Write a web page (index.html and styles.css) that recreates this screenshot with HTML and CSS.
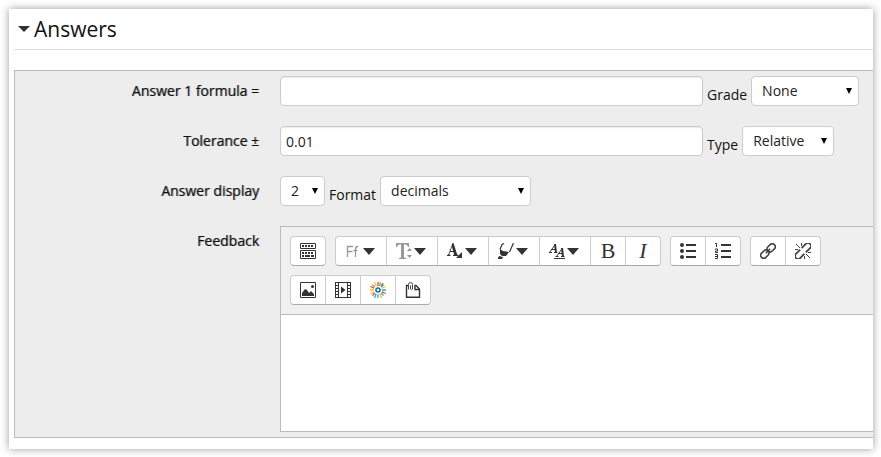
FILE: index.html
```html
<!DOCTYPE html>
<html lang="en">
<head>
<meta charset="utf-8">
<title>Answers</title>
<link rel="stylesheet" href="styles.css">
</head>
<body>
<main class="panel">
  <h2 class="heading"><svg class="twisty" width="12" height="6" viewBox="0 0 12 6"><path d="M0 0h12L6 6z"/></svg>Answers</h2>
  <form class="answers">
    <div class="row">
      <label class="name" for="formula">Answer 1 formula =</label>
      <div class="fields">
        <input class="text" id="formula" type="text">
        <label class="side" for="grade">Grade</label>
        <select class="grade" id="grade"><option>None</option></select>
      </div>
    </div>
    <div class="row">
      <label class="name" for="tolerance">Tolerance ±</label>
      <div class="fields">
        <input class="text" id="tolerance" type="text" value="0.01">
        <label class="side" for="type">Type</label>
        <select class="type" id="type"><option>Relative</option></select>
      </div>
    </div>
    <div class="row">
      <label class="name" for="digits">Answer display</label>
      <div class="fields">
        <select class="digits" id="digits"><option>2</option></select>
        <label class="side" for="format">Format</label>
        <select class="format" id="format"><option>decimals</option></select>
      </div>
    </div>
    <div class="row">
      <label class="name" for="feedback">Feedback</label>
      <div class="editor">
        <div class="toolbar">
          <div class="group">
            <button type="button" aria-label="Show more buttons"><svg width="16" height="16" viewBox="0 0 16 16"><path fill="none" stroke="#333" d="M.5.5h15v5H.5zM.5 7.500h15v8H.5z"/><path stroke="#333" stroke-width="2" stroke-dasharray="2 1" d="M2 3h12M2 10h12"/><path stroke="#333" stroke-width="2" d="M2 13h2M5 13h5M11 13h3"/></svg></button>
          </div>
          <div class="group">
            <button type="button" class="menu" aria-label="Font family"><svg width="16" height="16" viewBox="0 0 16 16"><path fill="none" stroke="#999" stroke-width="1.300" d="M2.500 14V3.500H8M2.500 8.500h5M10.500 14V6q0-2.500 2.500-2.500M8.500 7.500h4"/></svg><svg class="caret" width="12" height="7" viewBox="0 0 12 7"><path d="M0 0h12L6 7z"/></svg></button>
            <button type="button" class="menu" aria-label="Font size"><svg width="16" height="16" viewBox="0 0 16 16"><path fill="#999" d="M0 0h13v4h-1q-.5-2.500-2.500-2.500H8V14q0 1 2 1v1H3v-1q2 0 2-1V1.500H3.500Q1.500 1.500 1 4H0zM11 8l2.500-3L16 8zM11 12h5l-2.500 3z"/></svg><svg class="caret" width="12" height="7" viewBox="0 0 12 7"><path d="M0 0h12L6 7z"/></svg></button>
            <button type="button" class="menu" aria-label="Font colour"><svg width="16" height="16" viewBox="0 0 16 16"><path fill="#333" fill-rule="evenodd" d="M5.500 0h1L10 11q.4 1 1.500 1v1H6v-1q1.500 0 1-1l-.6-2H3l-.6 2q-.3 1 1.100 1v1H0v-1q1 0 1.500-1zM5 3.500L3.500 8H6z"/><path fill="#333" d="M15 9v6H9z"/></svg><svg class="caret" width="12" height="7" viewBox="0 0 12 7"><path d="M0 0h12L6 7z"/></svg></button>
            <button type="button" class="menu" aria-label="Background colour"><svg width="16" height="16" viewBox="0 0 16 16"><path fill="none" stroke="#333" stroke-width="1.200" d="M6 .5L4 1.500 2 6.500M15.500 0l-4 9"/><path fill="#333" d="M2 6l3 2 6 1-3 4H4L2 11zM1 13l4 1-1 2H0v-1z"/></svg><svg class="caret" width="12" height="7" viewBox="0 0 12 7"><path d="M0 0h12L6 7z"/></svg></button>
            <button type="button" class="menu" aria-label="Text style"><svg width="16" height="16" viewBox="0 0 16 16"><path fill="none" stroke="#333" d="M.5 9.500L6.500 1M2 6.500h4M0 9.500h3M5 9.500h3.500M7.500 13.500l6-8.500M9 10.500h4M6.500 13.500h3M12 13.500h3.500M5 15.500h11"/><path stroke="#333" stroke-width="2" d="M6 1l1 8.500M13 5l1 8.500"/></svg><svg class="caret" width="12" height="7" viewBox="0 0 12 7"><path d="M0 0h12L6 7z"/></svg></button>
            <button type="button" class="letter" aria-label="Bold">B</button>
            <button type="button" class="letter italic" aria-label="Italic">I</button>
          </div>
          <div class="group">
            <button type="button" aria-label="Unordered list"><svg width="16" height="16" viewBox="0 0 16 16"><path stroke="#333" stroke-width="2" d="M6 2h10M6 8h10M6 14h10"/><g fill="#333"><circle cx="2" cy="2" r="2"/><circle cx="2" cy="8" r="2"/><circle cx="2" cy="14" r="2"/></g></svg></button>
            <button type="button" aria-label="Ordered list"><svg width="16" height="16" viewBox="0 0 16 16"><path stroke="#333" stroke-width="2" d="M6 2h10M6 8h10M6 14h10"/><path fill="none" stroke="#333" d="M0 .5h1.500V4M0 6h2.500v2H.5v1.500H3M0 11.500h2.500v4H0M0 13.500h2.500"/></svg></button>
          </div>
          <div class="group">
            <button type="button" aria-label="Link"><svg width="16" height="16" viewBox="0 0 16 16"><g fill="none" stroke="#444" stroke-width="1.600" transform="rotate(-45 8 8)"><rect x="-1" y="5" width="9" height="6" rx="3"/><rect x="8" y="5" width="9" height="6" rx="3"/><path d="M5 8h6"/></g></svg></button>
            <button type="button" aria-label="Unlink"><svg width="16" height="16" viewBox="0 0 16 16"><g fill="none" stroke="#444" stroke-width="1.800" transform="rotate(-45 8 8)"><path d="M7 5H1a3 3 0 0 0 0 6h6M9 11h6a3 3 0 0 0 0-6H9"/></g><path stroke="#444" d="M1 1l4 4M6.500 0v3M0 6.500h3M15 15l-4-4M9.500 16v-3M16 9.500h-3"/></svg></button>
          </div>
          <div class="group">
            <button type="button" aria-label="Image"><svg width="16" height="16" viewBox="0 0 16 16"><path fill="none" stroke="#333" d="M.5.5h15v15H.5z"/><path fill="#333" d="M2 14v-3l3-4 2 1 2 3 2-2 3 3v2z"/><circle fill="#333" cx="12.500" cy="4.500" r="1.500"/></svg></button>
            <button type="button" aria-label="Media"><svg width="16" height="16" viewBox="0 0 16 16"><path fill="none" stroke="#333" d="M0 .5h16M0 15.500h16M.5 0v16M3.500 0v16M12.500 0v16M15.500 0v16"/><path stroke="#333" stroke-width="3" stroke-dasharray="1 2" d="M2 3v13M14 3v13"/><path fill="#333" d="M6 4.500L10.500 8 6 11.500z"/></svg></button>
            <button type="button" aria-label="Equation"><svg width="16" height="16" viewBox="0 0 16 16"><circle cx="8" cy="8" r="2" fill="none" stroke="#17769c" stroke-width="1.600"/><g fill="none" stroke-width="1.300"><path stroke="#f0384e" d="M8 0v4M13 1l-2 3.200M.5 4.500l3.500 1.700M2.500 13.500L5 11M15.500 11.500L12 9.800"/><path stroke="#f5c514" d="M4.500 0l1.700 4M0 8h4M.5 11.500L4 9.800M15.500 4.500L12 6.200M11.500 16l-1.500-4"/><path stroke="#22b0dd" d="M13.800 2.800L11 5M16 8h-4M13.500 13.500L11 11M8 16v-4M4.500 16L6 12"/><path stroke="#79c13f" d="M2.200 2.500L5 5M10.500 0L9.500 4"/></g></svg></button>
            <button type="button" aria-label="Manage files"><svg width="16" height="16" viewBox="0 0 16 16"><path fill="none" stroke="#333" stroke-width="1.400" d="M3 3.500H1.500v11.800h13V7L11 3.500H9.500M10 3v4.500h4.500"/><path fill="none" stroke="#444" d="M5.500 3.500V7q1 1.500 2 0V2.500a2 2 0 0 0-4 0v5"/></svg></button>
          </div>
        </div>
        <textarea id="feedback"></textarea>
      </div>
    </div>
  </form>
</main>
</body>
</html>
```
FILE: styles.css
```css
* {
  box-sizing: border-box;
}

body {
  margin: 0;
  padding: 9px 8px 8px 9px;
  background: #fff;
  color: #111;
  font: 14px/20px "Open Sans", "Noto Sans", sans-serif;
}

.panel {
  padding: 0 0 11px 5px;
  background: #fff;
  box-shadow: 0 0 8px rgba(0, 0, 0, 0.4);
}

.heading {
  display: flex;
  align-items: center;
  gap: 4px;
  height: 41px;
  margin: 0 0 20px;
  padding-left: 4px;
  border-bottom: 1px solid #ddd;
  font-size: 21px;
  font-weight: 400;
}

.twisty,
.caret {
  fill: #333;
}

.answers {
  display: grid;
  gap: 20px;
  padding: 5px 0;
  border: 1px solid #bbb;
  border-right: 0;
  background: #ededed;
}

.row {
  display: grid;
  grid-template-columns: 244px minmax(0, 1fr);
  column-gap: 21px;
}

.name {
  padding-top: 5px;
  text-align: right;
  text-shadow: 1px 0 rgba(0, 0, 0, 0.4);
}

.fields {
  display: flex;
  gap: 4px;
}

.side {
  padding-top: 9px;
  height: 29px;
}

.text,
select {
  height: 30px;
  border: 1px solid #ccc;
  border-radius: 4px;
  background-color: #fff;
  color: #222;
  font: inherit;
}

.text {
  flex: 0 1 423px;
  min-width: 0;
  padding: 0 5px;
  box-shadow: inset 0 1px 1px rgba(0, 0, 0, 0.08);
}

select {
  appearance: none;
  padding: 0 10px;
  background-image: url("data:image/svg+xml,%3Csvg xmlns='http://www.w3.org/2000/svg' width='6' height='6'%3E%3Cpath d='M0 0h6L3 6z'/%3E%3C/svg%3E");
  background-repeat: no-repeat;
  background-position: right 6px center;
}

.grade {
  width: 108px;
}

.type {
  width: 92px;
}

.digits {
  width: 45px;
}

.format {
  width: 151px;
}

.editor {
  border: 1px solid #bbb;
  border-right: 0;
  background: #f0f0f0;
}

.toolbar {
  display: flex;
  flex-wrap: wrap;
  gap: 9px;
  padding: 9px;
  border-bottom: 1px solid #bbb;
}

.group {
  display: flex;
  border: 1px solid #ccc;
  border-bottom-color: #aaa;
  border-radius: 4px;
  background: #fff;
}

button {
  display: flex;
  align-items: center;
  justify-content: center;
  gap: 2px;
  width: 34px;
  height: 28px;
  padding: 0;
  border: 0;
  background: none;
  color: #333;
}

button + button {
  width: 35px;
  border-left: 1px solid #ccc;
}

.menu,
.menu + .menu {
  width: 51px;
  padding-right: 2px;
}

.menu:first-child {
  width: 50px;
}

.letter {
  font: 22px/28px "Liberation Serif", serif;
}

.italic {
  font-style: italic;
}

textarea {
  display: block;
  width: 100%;
  height: 116px;
  padding: 8px;
  border: 0;
  background: #fff;
  font: inherit;
  resize: none;
}
```
